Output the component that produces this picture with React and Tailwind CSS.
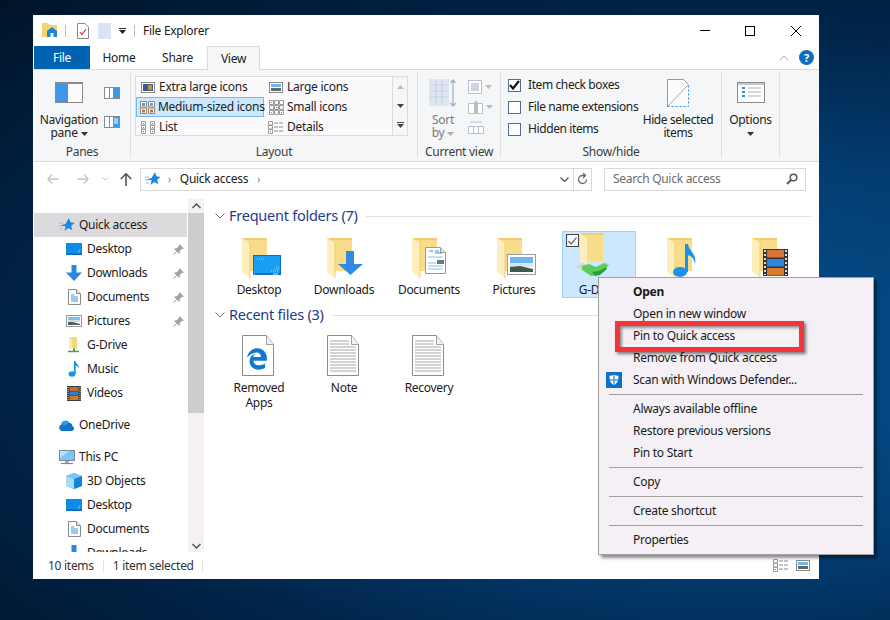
import React from 'react';
import { FaEdgeLegacy } from 'react-icons/fa6';

const FONT = { fontFamily: '"Noto Sans", "Open Sans", sans-serif' };

// ---- small icons (16px) ----
const Star = () => (
  <svg width="16" height="16" viewBox="0 0 16 16"><path d="M10 1l1.4 4.2L15.6 6l-3.4 2.8 1 4.4L9.500 11 5.400 14l1.200-4.800L1 8.500l5.500-1.500z" fill="#1c87e0" /><path d="M0 6h4M0 9h3M1 12h3" stroke="#8cc4f2" strokeWidth="1" /></svg>
);
const DesktopIco = () => (
  <svg width="16" height="12" viewBox="0 0 16 12"><rect width="16" height="12" fill="#0a8ce8" /><rect y="10.500" width="16" height="1.500" fill="#0468b4" /><path d="M11 9h4M13 7h2" stroke="#8fd0fb" strokeWidth="1" strokeDasharray="1 1" /></svg>
);
const DownIco = () => (
  <svg width="16" height="16" viewBox="0 0 16 16"><path d="M5.500 0h5v7.500H16L8 16 0 7.500h5.500z" fill="#2f86dd" /></svg>
);
const DocIco = () => (
  <svg width="13" height="16" viewBox="0 0 13 16"><path d="M.5.500h8l4 4v11H.5z" fill="#fff" stroke="#8a8a8a" /><path d="M8.500.500v4h4" fill="#e8e8e8" stroke="#8a8a8a" /><path d="M3 6h3M3 8h7M3 10h7M3 12h7" stroke="#3a96dc" strokeWidth="1" /></svg>
);
const PicIco = () => (
  <svg width="16" height="12" viewBox="0 0 16 12"><rect x=".5" y=".5" width="15" height="11" fill="#fff" stroke="#9a9a9a" /><rect x="2" y="2" width="12" height="3" fill="#7cc0ee" /><rect x="2" y="5" width="12" height="2" fill="#c8dcea" /><path d="M2 7l5 0 7 2v1H2z" fill="#50605a" /></svg>
);
const GDriveIco = () => (
  <svg width="12" height="16" viewBox="0 0 12 16"><path d="M1 0h8v11.500H1z" fill="#f6d977" /><path d="M1 0l3 1.500v10H1z" fill="#fbeaa8" /><path d="M5 11.500h2V14H5z" fill="#3aa845" /><path d="M0 14.500h11" stroke="#3aa845" strokeWidth="1.500" /></svg>
);
const MusicIco = () => (
  <svg width="12" height="16" viewBox="0 0 12 16"><ellipse cx="4" cy="13" rx="3.500" ry="2.700" fill="#1c93ea" /><path d="M6 13V0h1.500c.5 3 4 4 3.500 8-.2-2-2-3-3.300-3.300V13z" fill="#1c93ea" /></svg>
);
const VideoIco = () => (
  <svg width="14" height="15" viewBox="0 0 14 15"><rect width="14" height="15" fill="#3c3c3c" /><path d="M1 1v13M13 1v13" stroke="#ddd" strokeWidth="1" strokeDasharray="1 1" /><rect x="2.500" y="1" width="9" height="4" fill="#c86a30" /><rect x="2.500" y="5.500" width="9" height="4" fill="#2d7fd0" /><rect x="2.500" y="10" width="9" height="4" fill="#d07c2a" /></svg>
);
const CloudIco = () => (
  <svg width="17" height="11" viewBox="0 0 17 11"><path d="M4 11a3.300 3.300 0 01-.6-6.400A4.500 4.500 0 0111.500 3a3.500 3.500 0 013 3.200A2.500 2.500 0 0114 11z" fill="#1173c8" /><path d="M3 5a4.500 4.500 0 018.500-2 3.500 3.500 0 00-3.500 2.500C6 5 4.500 5 3 5z" fill="#2c9ae8" /></svg>
);
const PcIco = () => (
  <svg width="16" height="15" viewBox="0 0 16 15"><rect x=".5" y=".5" width="15" height="10" fill="#7cc4f2" stroke="#7c8a96" /><path d="M1 1h9L1 8z" fill="#b8e0f8" /><path d="M6 11h4v2H6z" fill="#9ab0c0" /><path d="M2 13.500h12" stroke="#7c8a96" strokeWidth="1.200" /></svg>
);
const CubeIco = () => (
  <svg width="16" height="16" viewBox="0 0 16 16"><path d="M8 0l8 3v10l-8 3-8-3V3z" fill="#3aa6ec" /><path d="M0 3l8 3v10l-8-3z" fill="#a8dcf8" /><path d="M8 6l8-3v10l-8 3z" fill="#1484d6" /><path d="M8 0l8 3-8 3-8-3z" fill="#7cc8f4" /></svg>
);
const Pin = () => (
  <svg width="11" height="11" viewBox="0 0 11 11"><path d="M6.500 0L11 4.500l-1 .6-.8-.3-2.500 2.500.1 1.700-.8.8-2.100-2.100L.6 11 0 10.400l3.300-3.300L1.200 5l.8-.8 1.700.1 2.500-2.500-.3-.8z" fill="#a3a3a3" /></svg>
);

// ---- big icons (48x44 box, folder back starts at x=7) ----
const Folder = ({ children }) => (
  <svg width="48" height="44" viewBox="0 0 48 44" className="block shrink-0">
    <path d="M7 2h25v33H14z" fill="#f2cd6d" />
    <path d="M10 4h22v31H15V7z" fill="#f8dc8a" />
    <path d="M7 2l8 5v35l-8-6z" fill="#fdeebb" />
    <path d="M15 7v35" stroke="#eec563" strokeWidth=".8" />
    {children}
  </svg>
);
const bigIcons = {
  desktop: (
    <Folder>
      <rect x="18" y="19" width="28" height="20" fill="#0c6fc0" />
      <rect x="19" y="20" width="26" height="17" fill="#18a0f6" />
      <path d="M36 35h8M39 33h5M41 31h3M22 23h8" stroke="#8fd6ff" strokeDasharray="1 1" />
      <path d="M19 38h1M38 38h5" stroke="#cfeeff" />
    </Folder>
  ),
  downloads: (
    <Folder>
      <path d="M26 15h8v13h9L30.500 39 18 28h8z" fill="#308be4" />
    </Folder>
  ),
  documents: (
    <Folder>
      <path d="M20.500 11.500h15l5 5v21h-20z" fill="#fff" stroke="#9a9a9a" />
      <path d="M35.500 11.500v5h5" fill="#e6e6e6" stroke="#9a9a9a" />
      <path d="M24 15h4M30 15h4M30 17h7" stroke="#2f8fdc" />
      <path d="M23 21h15M23 27h8M23 30h15M23 33h15" stroke="#8fbfe6" />
      <rect x="32" y="24" width="7" height="4" fill="#6a7a80" />
    </Folder>
  ),
  pictures: (
    <Folder>
      <rect x="17.500" y="18.500" width="28" height="20" fill="#fff" stroke="#9c9c9c" />
      <rect x="20" y="21" width="23" height="6" fill="#6cb8ee" />
      <rect x="20" y="27" width="23" height="4" fill="#d4e8f2" />
      <path d="M20 31l10-1 13 3v3H20z" fill="#46584e" />
    </Folder>
  ),
  music: (
    <Folder>
      <ellipse cx="20" cy="36" rx="7" ry="5" fill="#1a92ec" />
      <path d="M25 36V8h3c1 8 9 9 7 20-1-6-3.500-8-7-9v17z" fill="#1a92ec" />
    </Folder>
  ),
  videos: (
    <Folder>
      <rect x="18" y="13" width="25" height="27" fill="#333" />
      <path d="M20 14v25M41 14v25" stroke="#ddd" strokeWidth="2" strokeDasharray="2 2" />
      <rect x="22" y="14" width="17" height="7.500" fill="#d8743a" />
      <rect x="22" y="23" width="17" height="7.500" fill="#2b86dc" />
      <rect x="22" y="32" width="17" height="7.500" fill="#d87a2c" />
    </Folder>
  ),
  gdrive: (
    <svg width="48" height="44" viewBox="0 0 48 44" className="block shrink-0 overflow-visible">
      <path d="M5 -3h23v28H11z" fill="#f2cd6d" />
      <path d="M8 -1h20v26H12V2z" fill="#f8dc8a" />
      <path d="M5 -3l7 5v28l-7-5z" fill="#fdeebb" />
      <path d="M0 31l8-4 6 3-7 4z" fill="#d2d6d2" />
      <path d="M25 29l6-3 5 3-6 3z" fill="#d2d6d2" />
      <path d="M7 30l7-2 7 3 8-4 4 2-2 4-9 6-6 1-9-6z" fill="#5ccd5a" />
      <path d="M17 36l3 4 5-1 7-6-1-2-7 4z" fill="#2e9e3c" />
    </svg>
  ),
};

const FilePage = ({ children }) => (
  <svg width="48" height="44" viewBox="0 0 48 44" className="block shrink-0">
    <path d="M7.500 1.500h24l7 9v31h-31z" fill="#fff" stroke="#8c8c8c" />
    <path d="M31.500 1.500v9h7" fill="#efefef" stroke="#a0a0a0" />
    {children}
  </svg>
);
const noteLines = (
  <g stroke="#a6a6a6">
    <path d="M10 7h19M10 10h19M10 13h26M10 16h26M10 19h26M10 22h26M10 25h26M10 28h26M10 31h26M10 34h26M10 37h26" />
  </g>
);

function Tile({ icon, label, lines, selected }) {
  return (
    <div className={`w-[74px] min-h-[67px] pt-[4px] flex flex-col items-center relative border ${selected ? 'bg-[#cce8ff] border-[#99d1ff]' : 'border-transparent'}`}>
      {selected && (
        <div className="absolute left-[3px] top-[2px] z-10 w-[13px] h-[13px] bg-white/70 border border-[#444] flex items-center justify-center">
          <svg width="9" height="8" viewBox="0 0 9 8"><path d="M.5 4l2.500 3L8.500.5" fill="none" stroke="#444" strokeWidth="1.100" /></svg>
        </div>
      )}
      {icon}
      <div className="mt-[2px] text-center leading-[15px] text-[#1a1a1a]">
        {label}
        {lines && <div>{lines}</div>}
      </div>
    </div>
  );
}

function NavRow({ icon, label, child, pin, active }) {
  return (
    <div className={`h-6 flex items-center shrink-0 text-[#1a1a1a] ${active ? 'bg-[#dcdadc]' : ''}`}>
      <div className={`flex items-center justify-center ${child ? 'ml-[32px] w-[16px] mr-[5px]' : 'ml-[24px] w-[17px] mr-[4px]'}`}>{icon}</div>
      <span className="flex-1">{label}</span>
      {pin && <div className="mr-[3px]"><Pin /></div>}
    </div>
  );
}

function GalleryItem({ icon, label, active }) {
  return (
    <div className={`h-5 flex items-center pl-[3px] border ${active ? 'bg-[#cce8ff] border-[#7cb9e8]' : 'border-transparent'}`}>
      <div className="w-[16px] mr-[3px] flex justify-center">{icon}</div>
      <span className="whitespace-nowrap">{label}</span>
    </div>
  );
}

const ThumbIco = ({ kind }) => {
  if (kind === 'xl') return <svg width="14" height="11" viewBox="0 0 14 11"><rect x=".5" y=".5" width="13" height="10" fill="#fff" stroke="#8a8a8a" /><rect x="2" y="2" width="10" height="7" fill="#3c5c90" /><rect x="7" y="3" width="4" height="5" fill="#d88a30" /></svg>;
  if (kind === 'lg') return <svg width="14" height="11" viewBox="0 0 14 11"><rect x=".5" y=".5" width="13" height="10" fill="#fff" stroke="#8a8a8a" /><rect x="2" y="2" width="10" height="3" fill="#6cb8ee" /><path d="M2 6h10v3H2z" fill="#5c6c68" /></svg>;
  if (kind === 'md') return <svg width="15" height="13" viewBox="0 0 15 13"><path d="M.5.500h6v5.500h-6zM8.500.500h6v5.500h-6zM.5 7h6v5.500h-6zM8.500 7h6v5.500h-6z" fill="#fff" stroke="#8a8a8a" /><rect x="2" y="2" width="3" height="3" fill="#5c9cd8" /><rect x="10" y="2" width="3" height="3" fill="#7ab" /><rect x="2" y="8.500" width="3" height="3" fill="#c8762a" /><rect x="10" y="8.500" width="3" height="3" fill="#c8762a" /></svg>;
  if (kind === 'sm') return <svg width="15" height="15" viewBox="0 0 15 15"><path d="M.5.500h4v4h-4zM5.500.500h4v4h-4zM10.500.500h4v4h-4zM.5 5.500h4v4h-4zM5.500 5.500h4v4h-4zM10.500 5.500h4v4h-4zM.5 10.500h4v4h-4zM5.500 10.500h4v4h-4zM10.500 10.500h4v4h-4z" fill="#fff" stroke="#9a9a9a" /><path d="M2 2h1v1H2zM7 7h1v1H7zM12 12h1v1h-1zM2 12h1v1H2z" fill="#c8762a" /></svg>;
  if (kind === 'list') return <svg width="15" height="13" viewBox="0 0 15 13"><path d="M.5.500h4v3.500h-4zM.5 4.500h4V8h-4zM.5 8.500h4v4h-4zM9.500.500h4v3.500h-4zM9.500 4.500h4V8h-4zM9.500 8.500h4v4h-4z" fill="#fff" stroke="#9a9a9a" /><path d="M2 10h1v1H2zM11 10h1v1h-1z" fill="#d04040" /><path d="M2 2h1v1H2zM2 6h1v1H2zM11 2h1v1h-1zM11 6h1v1h-1z" fill="#888" /></svg>;
  return <svg width="16" height="13" viewBox="0 0 16 13"><path d="M.5.500h4v3.500h-4zM.5 4.500h4V8h-4zM.5 8.500h4v4h-4z" fill="#fff" stroke="#9a9a9a" /><path d="M6 2h4M11 2h4M6 6h4M11 6h4M6 10h4M11 10h4" stroke="#8a8a8a" /><path d="M2 10h1v1H2z" fill="#d04040" /></svg>;
};

function Check({ on, label }) {
  return (
    <div className="h-[22px] flex items-center">
      <div className="w-[13px] h-[13px] border border-[#4e6d9d] bg-white flex items-center justify-center mr-[7px]">
        {on && <svg width="11" height="10" viewBox="0 0 11 10"><path d="M1 5l3 3.500L10 1" fill="none" stroke="#111" strokeWidth="2.200" /></svg>}
      </div>
      <span className="whitespace-nowrap">{label}</span>
    </div>
  );
}

const Caret = ({ c = '#333' }) => (
  <svg width="7" height="4" viewBox="0 0 7 4" className="inline-block"><path d="M0 0h7L3.500 4z" fill={c} /></svg>
);

function Group({ w, label, children }) {
  return (
    <div className="shrink-0 flex flex-col items-stretch h-[86px] border-r border-[#dfe0e1]" style={{ width: w }}>
      <div className="flex-1 min-h-0">{children}</div>
      <div className="h-[16px] leading-[20px] text-center text-[#3c3c3c]">{label}</div>
    </div>
  );
}

function MenuRow({ label, bold, icon }) {
  return (
    <div className={`h-[22px] flex items-center text-[#1a1a1a] ${bold ? 'font-bold' : ''}`}>
      <div className="w-[34px] pl-[7px] flex items-center shrink-0">{icon}</div>
      <span className="whitespace-nowrap">{label}</span>
    </div>
  );
}
const MenuSep = () => (
  <div className="h-[7px] flex items-center pl-[10px] pr-[10px]"><div className="h-px w-full bg-[#a0a0a0]" /></div>
);

export default function App() {
  return (
    <div className="relative w-[890px] h-[620px] overflow-hidden pt-[15px] pl-[33px] bg-[radial-gradient(ellipse_at_82%_58%,#05508f_0%,#033d72_38%,#012449_66%,#001428_100%)] text-[12px] tracking-[-0.28px]" style={FONT}>
      <div className="w-[786px] h-[564px] bg-white flex flex-col pl-px">
        {/* title bar */}
        <div className="h-[31px] shrink-0 flex items-center">
          <svg className="ml-[8px]" width="16" height="15" viewBox="0 0 16 15"><path d="M0 0h6l2 2h7v12H0z" fill="#f6d36f" /><path d="M5 8l5-4 5 4v6H5z" fill="#1d86dd" /><path d="M8.500 10h3v4h-3z" fill="#fff" /></svg>
          <div className="w-px h-[12px] bg-[#bdbdbd] ml-[7px]" />
          <svg className="ml-[11px]" width="12" height="16" viewBox="0 0 12 16"><path d="M.5.500h7.500l3.500 3.500v11.500H.5z" fill="#fff" stroke="#8a8a8a" /><path d="M3 9l2 2.500L9 6" fill="none" stroke="#e03030" strokeWidth="1.200" /></svg>
          <div className="w-[13px] h-[16px] bg-[#dbe4f3] ml-[9px]" />
          <svg className="ml-[8px]" width="7" height="6" viewBox="0 0 7 6"><path d="M0 0h7v1H0zM0 2h7L3.500 6z" fill="#222" /></svg>
          <div className="w-px h-[12px] bg-[#bdbdbd] ml-[8px]" />
          <span className="ml-[8px] text-[#1a1a1a]">File Explorer</span>
          <div className="ml-auto flex items-center">
            <div className="w-[10px] h-px bg-black mr-[35px]" />
            <div className="w-[10px] h-[10px] border border-black mr-[36px]" />
            <svg className="mr-[18px]" width="10" height="10" viewBox="0 0 10 10"><path d="M0 0l10 10M10 0L0 10" stroke="#000" strokeWidth="1" /></svg>
          </div>
        </div>
        {/* tabs */}
        <div className="h-[23px] shrink-0 flex items-stretch relative z-10">
          <div className="w-[56px] bg-[#0063b1] text-white flex items-center justify-center">File</div>
          <div className="w-[58px] flex items-center justify-center text-[#222]">Home</div>
          <div className="w-[59px] flex items-center justify-center text-[#222]">Share</div>
          <div className="w-[53px] h-[24px] bg-[#f5f6f7] border border-b-0 border-[#dadbdc] flex items-center justify-center text-[#222]">View</div>
          <div className="ml-auto flex items-center">
            <svg className="mr-[10px]" width="10" height="6" viewBox="0 0 10 6"><path d="M1 5l4-4 4 4" fill="none" stroke="#aaa" /></svg>
            <div className="w-[15px] h-[15px] mr-[5px] rounded-full bg-[#0c6ebf] text-white text-[11px] font-bold leading-[15px] text-center">?</div>
          </div>
        </div>
        {/* ribbon */}
        <div className="h-[93px] shrink-0 bg-[#f5f6f7] border-t border-b border-[#dadbdc] pt-[2px] flex text-[#222]">
          <Group w={97} label="Panes">
            <div className="flex pt-[10px]">
              <div className="w-[70px] flex flex-col items-center">
                <svg width="28" height="21" viewBox="0 0 28 21"><rect width="28" height="21" fill="#8a8a8a" /><rect x="1" y="2" width="12" height="18" fill="#3f97e8" /><rect x="13" y="2" width="14" height="18" fill="#fbfbfb" /></svg>
                <div className="mt-[10px] leading-[13px] text-center">Navigation<br />pane <Caret /></div>
              </div>
              <div className="flex flex-col gap-[17px] pt-[5px]">
                <svg width="16" height="12" viewBox="0 0 16 12"><rect x=".5" y=".5" width="15" height="11" fill="#fff" stroke="#8a8a8a" /><rect x="9" y="1" width="6" height="10" fill="#3f97e8" /><path d="M5.500 1v10" stroke="#8a8a8a" /></svg>
                <svg width="16" height="12" viewBox="0 0 16 12"><rect x=".5" y=".5" width="15" height="11" fill="#fff" stroke="#8a8a8a" /><rect x="9" y="1" width="6" height="10" fill="#3f97e8" /><path d="M5.500 1v10" stroke="#8a8a8a" /><path d="M10 3h4M10 5h4M10 7h4" stroke="#fff" /></svg>
              </div>
            </div>
          </Group>
          <Group w={287} label="Layout">
            <div className="flex pt-[4px] pl-[4px]">
              <div className="w-[258px] h-[60px] border border-[#dadbdc] bg-[#fcf9fc] grid grid-cols-[128px_1fr]">
                <GalleryItem icon={<ThumbIco kind="xl" />} label="Extra large icons" />
                <GalleryItem icon={<ThumbIco kind="lg" />} label="Large icons" />
                <GalleryItem icon={<ThumbIco kind="md" />} label="Medium-sized icons" active />
                <GalleryItem icon={<ThumbIco kind="sm" />} label="Small icons" />
                <GalleryItem icon={<ThumbIco kind="list" />} label="List" />
                <GalleryItem icon={<ThumbIco kind="details" />} label="Details" />
              </div>
              <div className="w-[15px] h-[60px] border border-l-0 border-[#dadbdc] flex flex-col items-center">
                <div className="h-5 flex items-center"><svg width="7" height="4" viewBox="0 0 7 4"><path d="M0 4h7L3.500 0z" fill="#bbb" /></svg></div>
                <div className="h-5 flex items-center"><Caret c="#444" /></div>
                <div className="h-5 flex items-center"><svg width="7" height="6" viewBox="0 0 7 6"><path d="M0 0h7v1H0zM0 2h7L3.500 6z" fill="#444" /></svg></div>
              </div>
            </div>
          </Group>
          <Group w={83} label="Current view">
            <div className="flex pt-[7px] pl-[11px]">
              <div className="w-[28px] flex flex-col items-center">
                <svg width="28" height="28" viewBox="0 0 28 28"><rect width="20" height="27" fill="#dfe6f2" /><path d="M1 6h18M1 12h18M1 18h18M7 1v25M13 1v25" stroke="#c2cfe4" /><path d="M24 1v26M21.500 4L24 1l2.500 3M21.500 24l2.500 3 2.500-3" fill="none" stroke="#9fb0c8" strokeWidth="1.200" /></svg>
                <div className="mt-[6px] leading-[13px] text-center text-[#7a7a7a]">Sort<br />by <Caret c="#aaa" /></div>
              </div>
              <div className="ml-[11px] flex flex-col gap-[6px] pt-[1px]">
                <div className="flex items-center gap-[3px]"><svg width="14" height="14" viewBox="0 0 14 14"><rect x=".5" y=".5" width="13" height="13" fill="#fff" stroke="#b4c0d4" /><rect x="3" y="3" width="8" height="8" fill="#cfd4da" /></svg><Caret c="#bbb" /></div>
                <div className="flex items-center gap-[3px]"><svg width="15" height="14" viewBox="0 0 15 14"><path d="M.5 3.500h14v10H.5z" fill="#fff" stroke="#b4c0d4" /><rect x="6" y="2" width="4" height="11" fill="#b8bec8" /><path d="M8 0v2" stroke="#b8bec8" /></svg><Caret c="#bbb" /></div>
                <svg width="16" height="14" viewBox="0 0 16 14"><path d="M.5 6.500h15v7H.5zM5.500 7v6M10.500 7v6" fill="#fff" stroke="#b4c0d4" /><path d="M2 2h12" stroke="#b4c0d4" /></svg>
              </div>
            </div>
          </Group>
          <Group w={221} label="Show/hide">
            <div className="flex pl-[7px] pt-[2px]">
              <div className="w-[136px] tracking-[-0.4px]">
                <Check on label="Item check boxes" />
                <Check label="File name extensions" />
                <Check label="Hidden items" />
              </div>
              <div className="flex flex-col items-center w-[68px] pt-[5px] tracking-[-0.4px]">
                <svg width="22" height="28" viewBox="0 0 22 28"><path d="M.5.500h16l5 5v22H.5z" fill="#fcfcfc" /><path d="M.5 27.500V.5h16l5 5" fill="none" stroke="#9a9a9a" /><path d="M1 27L21 6" stroke="#aaa" /><path d="M.5 27.500h21V6" fill="none" stroke="#2f8fe0" strokeDasharray="2 2" /></svg>
                <div className="mt-[6px] leading-[13px] text-center whitespace-nowrap">Hide selected<br />items</div>
              </div>
            </div>
          </Group>
          <Group w={58} label="">
            <div className="flex flex-col items-center pt-[10px]">
              <svg width="28" height="21" viewBox="0 0 28 21"><rect x=".5" y=".5" width="27" height="20" fill="#fff" stroke="#8a8a8a" /><rect x="1" y="1" width="26" height="2" fill="#c8c8c8" /><path d="M5 6h3M5 10h3M5 14h3" stroke="#2f8fe0" strokeWidth="2" /><path d="M11 6h13M11 10h13M11 14h13" stroke="#b0b0b0" /></svg>
              <div className="mt-[10px] leading-[13px] text-center">Options</div>
              <div className="leading-[13px]"><Caret /></div>
            </div>
          </Group>
        </div>
        {/* address bar */}
        <div className="h-[37px] shrink-0 flex items-center pb-[3px]">
          <svg className="ml-[13px]" width="12" height="10" viewBox="0 0 12 10"><path d="M5 .5L1 5l4 4.500M1 5h11" fill="none" stroke="#c4c4c4" strokeWidth="1.400" /></svg>
          <svg className="ml-[18px]" width="12" height="10" viewBox="0 0 12 10"><path d="M7 .5L11 5l-4 4.500M11 5H0" fill="none" stroke="#c4c4c4" strokeWidth="1.400" /></svg>
          <svg className="ml-[13px]" width="6" height="4" viewBox="0 0 6 4"><path d="M.5.500L3 3 5.500.500" fill="none" stroke="#c4c4c4" /></svg>
          <svg className="ml-[12px]" width="12" height="13" viewBox="0 0 12 13"><path d="M.8 6L6 .8 11.200 6M6 1v12" fill="none" stroke="#555" strokeWidth="1.600" /></svg>
          <div className="ml-[8px] w-[452px] h-[23px] border border-[#d9d9d9] flex items-center bg-white">
            <div className="ml-[4px]"><Star /></div>
            <span className="ml-[7px] text-[#777] text-[10px]">›</span>
            <span className="ml-[9px] text-[#1a1a1a]">Quick access</span>
            <span className="ml-[9px] text-[#777] text-[10px]">›</span>
            <div className="ml-auto flex items-center h-full">
              <svg width="9" height="5" viewBox="0 0 9 5"><path d="M.5.500l4 4 4-4" fill="none" stroke="#555" strokeWidth="1.200" /></svg>
              <div className="w-px h-full bg-[#d9d9d9] ml-[4px]" />
              <svg className="mx-[3px]" width="11" height="12" viewBox="0 0 11 12"><path d="M9.500 6.500A4 4 0 115.500 2.500h2M6 0l2.500 2.500L6 5" fill="none" stroke="#666" strokeWidth="1.300" /></svg>
            </div>
          </div>
          <div className="ml-[12px] w-[202px] h-[23px] border border-[#d9d9d9] flex items-center bg-white pl-[8px] pr-[7px]">
            <span className="text-[#6d6d6d]">Search Quick access</span>
            <svg className="ml-auto" width="12" height="12" viewBox="0 0 12 12"><circle cx="7.500" cy="4.500" r="3.300" fill="none" stroke="#555" strokeWidth="1.500" /><path d="M5 7l-4 4" stroke="#555" strokeWidth="2" /></svg>
          </div>
        </div>
        {/* body */}
        <div className="flex-1 min-h-0 flex">
          <div className="w-[153px] shrink-0 overflow-hidden flex flex-col pt-[14px]">
            <NavRow icon={<Star />} label="Quick access" active />
            <NavRow child icon={<DesktopIco />} label="Desktop" pin />
            <NavRow child icon={<DownIco />} label="Downloads" pin />
            <NavRow child icon={<DocIco />} label="Documents" pin />
            <NavRow child icon={<PicIco />} label="Pictures" pin />
            <NavRow child icon={<GDriveIco />} label="G-Drive" />
            <NavRow child icon={<MusicIco />} label="Music" />
            <NavRow child icon={<VideoIco />} label="Videos" />
            <div className="h-2 shrink-0" />
            <NavRow icon={<CloudIco />} label="OneDrive" />
            <div className="h-2 shrink-0" />
            <NavRow icon={<PcIco />} label="This PC" />
            <NavRow child icon={<CubeIco />} label="3D Objects" />
            <NavRow child icon={<DesktopIco />} label="Desktop" />
            <NavRow child icon={<DocIco />} label="Documents" />
            <NavRow child icon={<DownIco />} label="Downloads" />
          </div>
          <div className="w-[16px] ml-px shrink-0 bg-[#f4f0f4] flex flex-col items-center">
            <div className="h-[14px] w-full flex items-center justify-center"><svg width="9" height="6" viewBox="0 0 9 6"><path d="M.5 5l4-4 4 4" fill="none" stroke="#555" strokeWidth="1.500" /></svg></div>
            <div className="h-[200px] w-full bg-[#cdcdcd]" />
            <div className="mt-auto h-[12px] flex items-center"><svg width="9" height="6" viewBox="0 0 9 6"><path d="M.5 1l4 4 4-4" fill="none" stroke="#555" strokeWidth="1.500" /></svg></div>
          </div>
          <div className="flex-1 min-w-0 pl-[11px] pr-[8px] pt-[8px]">
            <div className="h-[18px] flex items-center">
              <svg width="10" height="6" viewBox="0 0 10 6"><path d="M.5.500L5 5 9.500.5" fill="none" stroke="#777" /></svg>
              <span className="ml-[4px] text-[14.500px] tracking-[-0.25px] text-[#1e3a8a] whitespace-nowrap">Frequent folders (7)</span>
              <div className="ml-[8px] h-px flex-1 bg-[#e2e2e2]" />
            </div>
            <div className="flex gap-[11px] ml-[7px] mt-[6px]">
              <Tile icon={bigIcons.desktop} label="Desktop" />
              <Tile icon={bigIcons.downloads} label="Downloads" />
              <Tile icon={bigIcons.documents} label="Documents" />
              <Tile icon={bigIcons.pictures} label="Pictures" />
              <Tile icon={bigIcons.gdrive} label="G-Drive" selected />
              <Tile icon={bigIcons.music} label="Music" />
              <Tile icon={bigIcons.videos} label="Videos" />
            </div>
            <div className="h-[18px] flex items-center mt-[8px]">
              <svg width="10" height="6" viewBox="0 0 10 6"><path d="M.5.500L5 5 9.500.5" fill="none" stroke="#777" /></svg>
              <span className="ml-[4px] text-[14.500px] tracking-[-0.25px] text-[#1e3a8a] whitespace-nowrap">Recent files (3)</span>
              <div className="ml-[8px] h-px flex-1 bg-[#e2e2e2]" />
            </div>
            <div className="flex gap-[11px] ml-[7px] mt-[5px]">
              <Tile label="Removed" lines="Apps" icon={
                <div className="relative w-[48px] h-[44px] shrink-0">
                  <FilePage />
                  <FaEdgeLegacy className="absolute left-[11px] top-[14px] text-[#0f78d4]" size={22} />
                </div>
              } />
              <Tile label="Note" icon={<FilePage>{noteLines}</FilePage>} />
              <Tile label="Recovery" icon={<FilePage>{noteLines}</FilePage>} />
            </div>
          </div>
        </div>
        {/* status bar */}
        <div className="h-[27px] shrink-0 flex items-center text-[#333] bg-white">
          <span className="ml-[14px]">10 items</span>
          <div className="w-px h-[14px] bg-[#e4e4e4] ml-[9px]" />
          <span className="ml-[9px]">1 item selected</span>
          <div className="w-px h-[14px] bg-[#e4e4e4] ml-[8px]" />
          <div className="ml-auto flex items-center gap-[7px] mr-[9px]">
            <ThumbIco kind="details" />
            <ThumbIco kind="lg" />
          </div>
        </div>
      </div>
      {/* context menu */}
      <div className="absolute left-[598px] top-[277px] w-[276px] h-[278px] bg-[#f4f0f5] border border-[#a0a0a0] shadow-[3px_3px_3px_rgba(0,0,0,0.45)] py-[3px]">
        <MenuRow label="Open" bold />
        <MenuRow label="Open in new window" />
        <MenuRow label="Pin to Quick access" />
        <MenuRow label="Remove from Quick access" />
        <MenuRow label="Scan with Windows Defender..." icon={
          <svg width="16" height="16" viewBox="0 0 16 16"><rect width="16" height="16" fill="#0a72c8" /><path d="M8 2.500c1.500 1 3 1.300 4.500 1.300 0 4.500-1 7.500-4.500 9.500-3.500-2-4.500-5-4.500-9.500C5 3.800 6.500 3.500 8 2.500z" fill="#fff" /><path d="M8 2.500v11M3.500 8h9" stroke="#0a72c8" /></svg>
        } />
        <MenuSep />
        <MenuRow label="Always available offline" />
        <MenuRow label="Restore previous versions" />
        <MenuRow label="Pin to Start" />
        <MenuSep />
        <MenuRow label="Copy" />
        <MenuSep />
        <MenuRow label="Create shortcut" />
        <MenuSep />
        <MenuRow label="Properties" />
      </div>
      {/* annotation */}
      <div className="absolute left-[615px] top-[321px] w-[189px] h-[31px] border-[5px] border-[#f5333a] shadow-[2px_2px_3px_rgba(0,0,0,0.5),inset_2px_2px_3px_rgba(0,0,0,0.4)]" />
    </div>
  );
}
